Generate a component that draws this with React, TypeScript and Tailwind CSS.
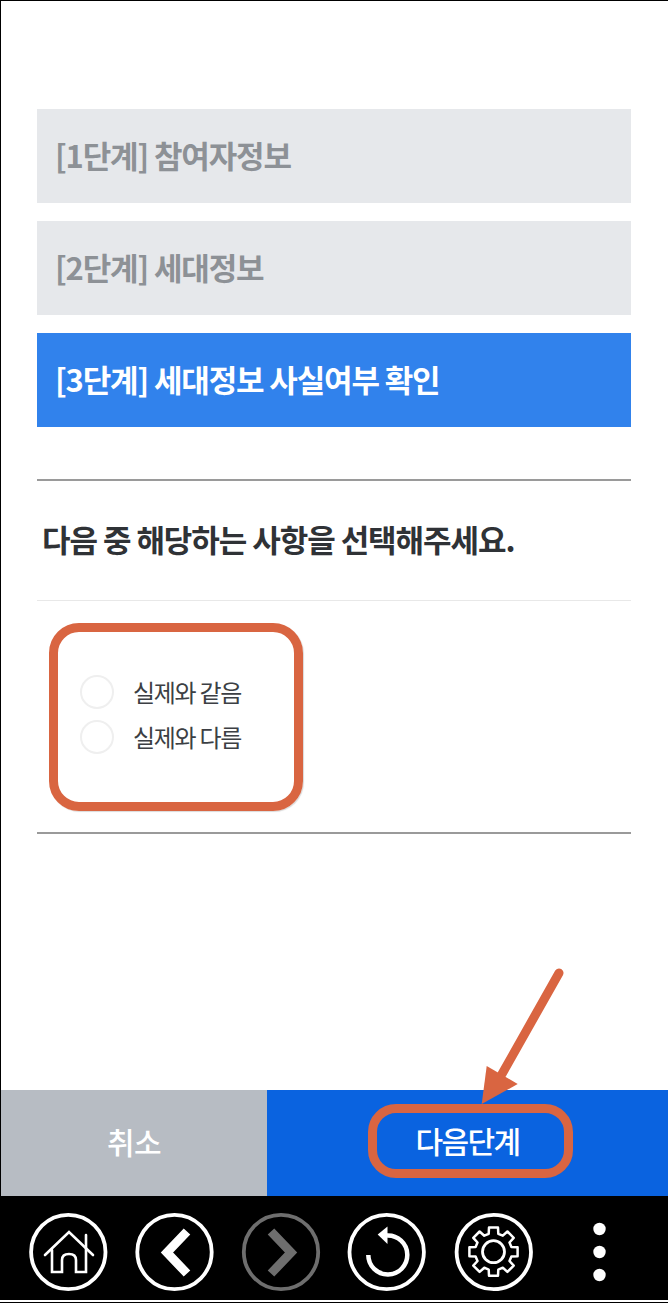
function gearPath(cx: number, cy: number) {
  const pts: string[] = [];
  const rad = (d: number) => (d * Math.PI) / 180;
  const outer = 24.5;
  const root = 18.5;
  for (let i = 0; i < 8; i++) {
    const a = i * 45 - 90;
    for (const [r, d] of [
      [root, -15],
      [outer, -10.5],
      [outer, 10.5],
      [root, 15],
    ] as const) {
      pts.push(`${(cx + r * Math.cos(rad(a + d))).toFixed(1)} ${(cy + r * Math.sin(rad(a + d))).toFixed(1)}`);
    }
  }
  return `M${pts.join(" L")} Z`;
}

export default function App() {
  const font = { fontFamily: '"Noto Sans CJK KR", "Noto Sans", sans-serif' };
  return (
    <div className="relative flex h-[1303px] w-[668px] flex-col overflow-hidden bg-white" style={font}>
      <div className="flex flex-1 flex-col border-l border-t border-black pl-[36px] pr-[37px] pt-[108px]">
        <div className="flex h-[94px] items-center bg-[#e6e8eb] pb-[2px] pl-[18px] text-[31px] font-bold tracking-[-1.15px] text-[#8d9196]">[1단계] 참여자정보</div>
        <div className="mt-[18px] flex h-[94px] items-center bg-[#e6e8eb] pb-[2px] pl-[18px] text-[31px] font-bold tracking-[-1.15px] text-[#8d9196]">[2단계] 세대정보</div>
        <div className="mt-[18px] flex h-[94px] items-center bg-[#3182ec] pb-[2px] pl-[18px] text-[31px] font-bold tracking-[-1.15px] text-white">[3단계] 세대정보 사실여부 확인</div>
        <div className="mt-[52px] h-[2px] bg-[#9a9a9a]" />
        <div className="flex h-[120px] items-center border-b border-[#e8e8e8] pb-[2px] pl-[5px] text-[31px] font-bold tracking-[-1.05px] text-[#2f3236]">다음 중 해당하는 사항을 선택해주세요.</div>
        <div className="flex h-[233px] flex-col border-b-2 border-[#9a9a9a] pl-[43px] pt-[73px]">
          <div className="flex h-[36px] items-center gap-[19px]">
            <span className="h-[34px] w-[34px] rounded-full border-2 border-[#efefef]" />
            <span className="text-[24px] tracking-[-1.3px] text-[#3c3f44]">실제와 같음</span>
          </div>
          <div className="mt-[9px] flex h-[36px] items-center gap-[19px]">
            <span className="h-[34px] w-[34px] rounded-full border-2 border-[#efefef]" />
            <span className="text-[24px] tracking-[-1.3px] text-[#3c3f44]">실제와 다름</span>
          </div>
        </div>
      </div>
      <div className="flex h-[106px] border-l border-black">
        <div className="flex w-[266px] items-center justify-center bg-[#b7bcc3] pb-[4px] text-[30px] font-medium tracking-[-0.5px] text-white">취소</div>
        <div className="flex flex-1 items-center justify-center bg-[#0a63e0] pb-[5px] text-[30px] font-medium tracking-[-1.6px] text-white">다음단계</div>
      </div>
      <div className="h-[104px] bg-black">
        <svg width="668" height="104" viewBox="0 0 668 104" className="block">
          <g fill="none" stroke="#fff" strokeWidth="3.8">
            <circle cx="68.3" cy="56" r="37.2" />
            <circle cx="174.5" cy="56" r="37.2" />
            <circle cx="386.7" cy="56" r="37.2" />
            <circle cx="493.8" cy="56" r="37.2" />
          </g>
          <circle cx="281" cy="56" r="37.2" fill="none" stroke="#6e6e6e" strokeWidth="3.8" />
          <g fill="none" stroke="#fff" strokeWidth="2.6" strokeLinecap="round" strokeLinejoin="miter">
            <path d="M45 59 L69 36 L93 59" />
            <path d="M52 54 V76 H62 V64 Q62 58 69 58 Q76 58 76 64 V76 H86 V39" />
          </g>
          <path d="M187 35.5 L167 56.5 L187 77.5" fill="none" stroke="#fff" strokeWidth="9" />
          <path d="M271 35.5 L291 56.5 L271 77.5" fill="none" stroke="#6e6e6e" strokeWidth="9" />
          <path d="M368.3 59 A 19.5 19.5 0 1 0 387 39.5" fill="none" stroke="#fff" strokeWidth="4.5" />
          <path d="M377.7 38.5 L387.5 30.5 V48 Z" fill="#fff" />
          <circle cx="493.5" cy="55.7" r="11" fill="none" stroke="#fff" strokeWidth="2.8" />
          <path d={gearPath(493.5, 55.7)} fill="none" stroke="#fff" strokeWidth="2.5" strokeLinejoin="round" />
          <g fill="#fff">
            <circle cx="599.5" cy="33" r="6.2" />
            <circle cx="599.5" cy="56" r="6.2" />
            <circle cx="599.5" cy="79" r="6.2" />
          </g>
        </svg>
      </div>
      <div className="ml-px h-[2px] bg-white" />
      <div className="h-px bg-black" />

      <div className="absolute left-[49px] top-[623px] h-[188px] w-[254px] rounded-[30px] border-[9px] border-[#d96541] shadow-[1px_1px_1px_rgba(0,0,0,0.15)]" />
      <div className="absolute left-[368px] top-[1104px] h-[74px] w-[205px] rounded-[28px] border-[9px] border-[#d96541]" />
      <svg className="absolute left-[470px] top-[960px]" width="110" height="150" viewBox="0 0 110 150">
        <path d="M89 13 L32 114" stroke="#d96541" strokeWidth="9" strokeLinecap="round" fill="none" />
        <path d="M16.7 106 L47.7 124 L11.7 144 Z" fill="#d96541" />
      </svg>
    </div>
  );
}
